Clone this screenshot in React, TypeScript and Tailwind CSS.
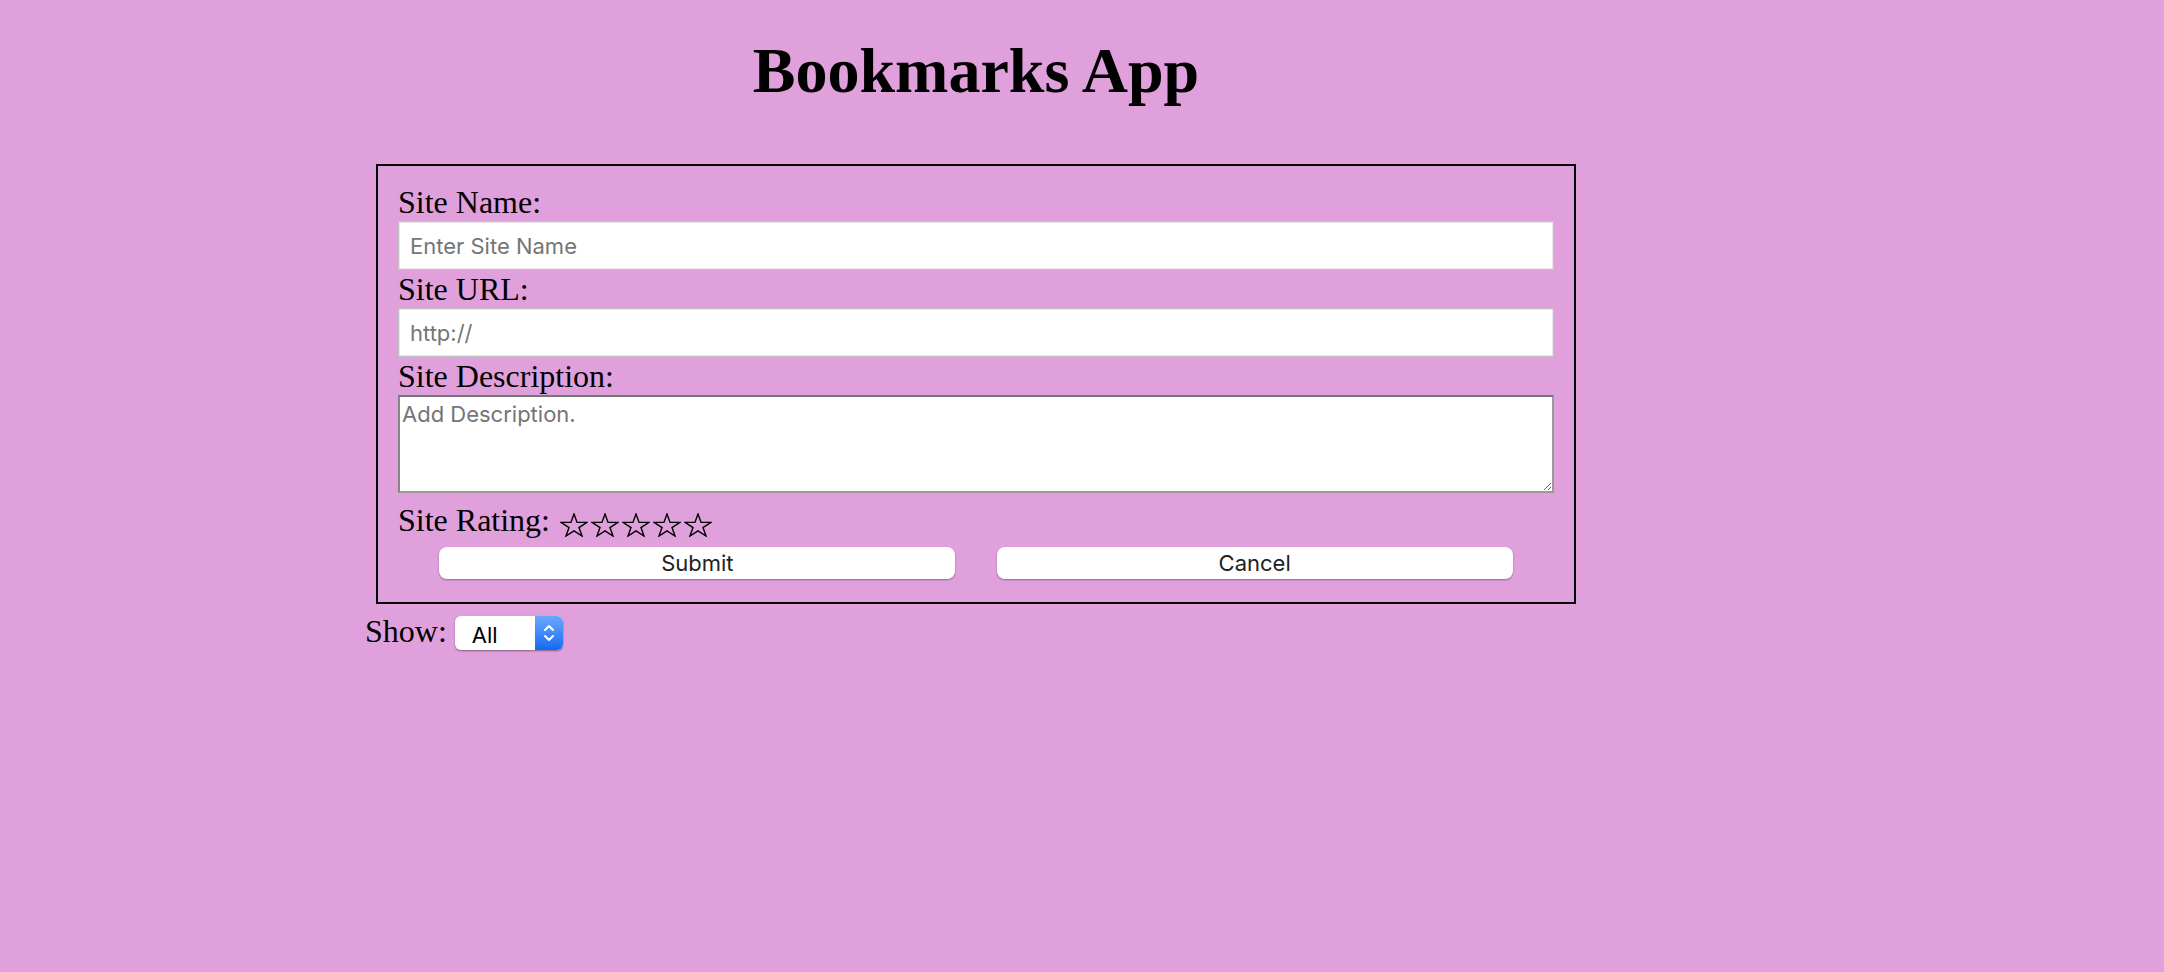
import { useState } from "react";

const serif = "font-['Liberation_Serif','Times_New_Roman',serif]";
const sans = "font-['Inter','Liberation_Sans',sans-serif]";

function Star() {
  return (
    <svg width="28" height="24" viewBox="0 0 28 24" fill="none">
      <polygon
        points="14,1 17.07,9.4 27,9.4 18.97,14.59 22.04,23 14,17.8 5.96,23 9.03,14.59 1,9.4 10.93,9.4"
        stroke="#000"
        strokeWidth="1.4"
        strokeLinejoin="miter"
      />
    </svg>
  );
}

export default function App() {
  const [show, setShow] = useState("all");

  return (
    <main className={`min-h-screen bg-[#e0a0dc] text-black ${serif}`}>
      <div className="ml-[365px] w-[1222px] pt-[34px]">
        <h1 className="text-center text-[64px] leading-[74px] font-bold mb-[56px]">
          Bookmarks App
        </h1>

        <form
          className="mx-[11px] border-2 border-black px-[20px] pt-[17px] pb-[23px]"
          onSubmit={(e) => e.preventDefault()}
        >
          <label className="block text-[32px] leading-[38px]">Site Name:</label>
          <input
            type="text"
            placeholder="Enter Site Name"
            className={`block w-full h-[49px] bg-white border border-[#c2c2c2] shadow-[inset_0_0_0_1px_#e9e9e9] px-[11px] text-[22px] placeholder:text-[#757575] outline-none ${sans}`}
          />

          <label className="block text-[32px] leading-[38px]">Site URL:</label>
          <input
            type="text"
            placeholder="http://"
            className={`block w-full h-[49px] bg-white border border-[#c2c2c2] shadow-[inset_0_0_0_1px_#e9e9e9] px-[11px] text-[22px] placeholder:text-[#757575] outline-none ${sans}`}
          />

          <label className="block text-[32px] leading-[38px]">Site Description:</label>
          <textarea
            placeholder="Add Description."
            className={`block w-full h-[98px] mb-[8px] bg-white border-2 border-[#9a9a9a] border-t-[#777] border-l-[#858585] pl-[2px] pt-[4px] text-[22px] leading-[27px] placeholder:text-[#757575] outline-none ${sans}`}
          />

          <div className="flex items-start text-[32px] leading-[38px]">
            <span>Site Rating:</span>
            <div className="ml-[10px] mt-[12px] flex gap-[3px]">
              {[0, 1, 2, 3, 4].map((i) => (
                <Star key={i} />
              ))}
            </div>
          </div>

          <div className="mt-[8px] flex justify-evenly">
            <button
              type="submit"
              className={`w-[516px] h-[32px] rounded-[8px] bg-white text-[22px] text-[#222] shadow-[0_1px_2px_rgba(0,0,0,0.35)] ${sans}`}
            >
              Submit
            </button>
            <button
              type="button"
              className={`w-[516px] h-[32px] rounded-[8px] bg-white text-[22px] text-[#222] shadow-[0_1px_2px_rgba(0,0,0,0.35)] ${sans}`}
            >
              Cancel
            </button>
          </div>
        </form>

        <div className="mt-[8px] flex items-start text-[32px] leading-[38px]">
          <span>Show:</span>
          <div className="ml-[8px] mt-[4px] flex h-[34px] w-[108px] overflow-hidden rounded-[6px] bg-white shadow-[0_1px_2px_rgba(0,0,0,0.4)]">
            <select
              value={show}
              onChange={(e) => setShow(e.target.value)}
              className={`flex-1 min-w-0 appearance-none bg-transparent pl-[17px] text-[22px] text-black outline-none ${sans}`}
            >
              <option value="all">All</option>
              <option value="1">1+ Stars</option>
              <option value="2">2+ Stars</option>
              <option value="3">3+ Stars</option>
              <option value="4">4+ Stars</option>
              <option value="5">5 Stars</option>
            </select>
            <span className="flex w-[28px] items-center justify-center bg-gradient-to-b from-[#6aa8fb] to-[#0d6af4]">
              <svg width="14" height="22" viewBox="0 0 14 22" fill="none" stroke="#fff" strokeWidth="2" strokeLinecap="round" strokeLinejoin="round">
                <path d="M3 8 L7 4 L11 8" />
                <path d="M3 14 L7 18 L11 14" />
              </svg>
            </span>
          </div>
        </div>
      </div>
    </main>
  );
}
